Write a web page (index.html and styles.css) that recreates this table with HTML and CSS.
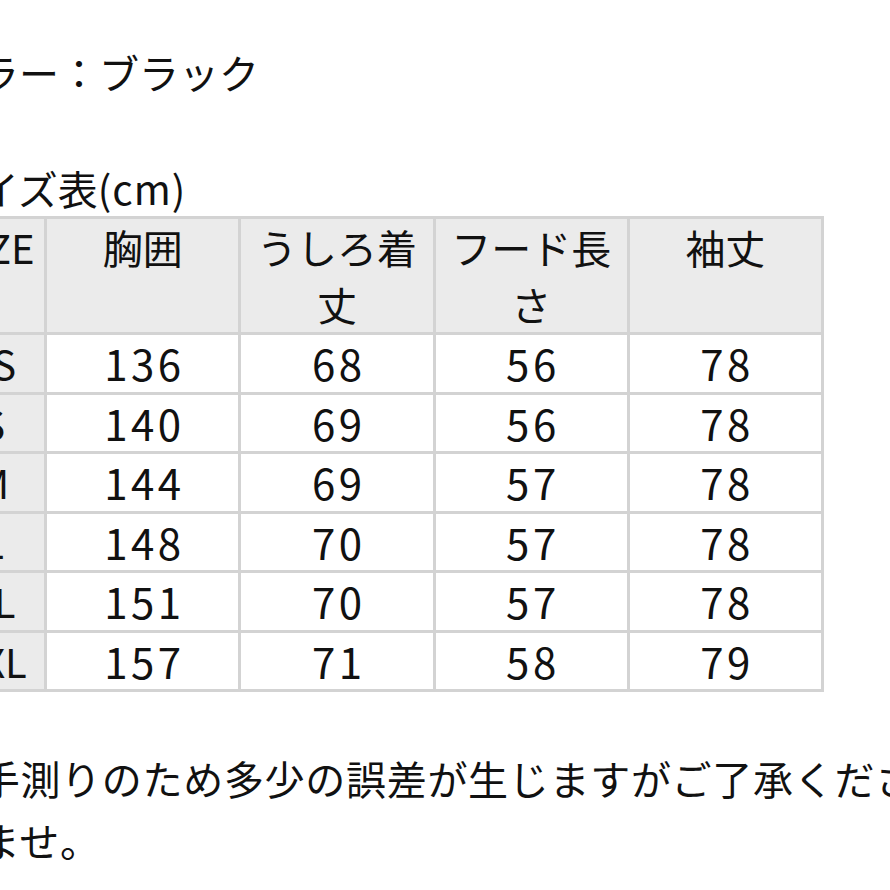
FILE: index.html
```html
<!DOCTYPE html>
<html lang="ja">
<head>
<meta charset="utf-8">
<link rel="stylesheet" href="styles.css">
</head>
<body>
<div class="page">
  <p class="line">カラー：ブラック</p>
  <p class="line blank">&nbsp;</p>
  <p class="line">サイズ表<span class="unit">(cm)</span></p>
  <table class="size-table">
    <thead>
      <tr>
        <th class="col-size">SIZE</th>
        <th>胸囲</th>
        <th>うしろ着丈</th>
        <th>フード長さ</th>
        <th>袖丈</th>
      </tr>
    </thead>
    <tbody>
      <tr><td class="col-size">XS</td><td class="num">136</td><td class="num">68</td><td class="num">56</td><td class="num">78</td></tr>
      <tr><td class="col-size">S</td><td class="num">140</td><td class="num">69</td><td class="num">56</td><td class="num">78</td></tr>
      <tr><td class="col-size">M</td><td class="num">144</td><td class="num">69</td><td class="num">57</td><td class="num">78</td></tr>
      <tr><td class="col-size">L</td><td class="num">148</td><td class="num">70</td><td class="num">57</td><td class="num">78</td></tr>
      <tr><td class="col-size">XL</td><td class="num">151</td><td class="num">70</td><td class="num">57</td><td class="num">78</td></tr>
      <tr><td class="col-size">XXL</td><td class="num">157</td><td class="num">71</td><td class="num">58</td><td class="num">79</td></tr>
    </tbody>
  </table>
  <p class="note">※手測りのため多少の誤差が生じますがご了承くださいませ。</p>
</div>
</body>
</html>
```

FILE: styles.css
```css
html, body {
  margin: 0;
  padding: 0;
  background: #ffffff;
  overflow: hidden;
}
body {
  width: 890px;
  height: 890px;
}
.page {
  margin-left: -61px;
  padding-top: 43px;
  width: 990px;
  font-family: "Noto Sans CJK JP", "Noto Sans", sans-serif;
  font-size: 40px;
  color: #111111;
}
.line {
  margin: 0;
  line-height: 58px;
  white-space: nowrap;
}
.unit {
  letter-spacing: 1px;
}
.size-table {
  border-collapse: collapse;
  table-layout: fixed;
  width: 885px;
  margin-top: -1px;
}
.size-table th,
.size-table td {
  border: 3px solid #d3d3d3;
  padding: 0;
  text-align: center;
  width: 191px;
  line-height: 56.5px;
  font-weight: normal;
  background: #ffffff;
}
.size-table th {
  vertical-align: top;
  background: #ebebeb;
}
.size-table .col-size {
  width: 102px;
  background: #ebebeb;
}
.size-table .num {
  font-size: 42px;
  letter-spacing: 3.5px;
  padding-left: 3.5px;
}
.note {
  margin: 55px 0 0 0;
  line-height: 62px;
  letter-spacing: 0.7px;
}
```
